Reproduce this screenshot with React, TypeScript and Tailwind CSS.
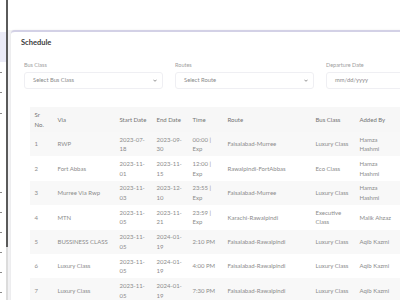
import React from 'react';

interface Row {
  sr: string;
  via: string;
  start: string;
  end: string;
  time: string;
  route: string;
  busClass: string;
  addedBy: string;
}

const ROWS: Row[] = [
  { sr: '1', via: 'RWP', start: '2023-07-\n18', end: '2023-09-\n30', time: '00:00 |\nExp', route: 'Faisalabad-Murree', busClass: 'Luxury Class', addedBy: 'Hamza\nHashmi' },
  { sr: '2', via: 'Fort Abbas', start: '2023-11-\n01', end: '2023-11-\n15', time: '12:00 |\nExp', route: 'Rawalpindi-FortAbbas', busClass: 'Eco Class', addedBy: 'Hamza\nHashmi' },
  { sr: '3', via: 'Murree Via Rwp', start: '2023-11-\n03', end: '2023-12-\n10', time: '23:55 |\nExp', route: 'Faisalabad-Murree', busClass: 'Luxury Class', addedBy: 'Hamza\nHashmi' },
  { sr: '4', via: 'MTN', start: '2023-11-\n05', end: '2023-11-\n21', time: '23:59 |\nExp', route: 'Karachi-Rawalpindi', busClass: 'Executive\nClass', addedBy: 'Malik Ahzaz' },
  { sr: '5', via: 'BUSSINESS CLASS', start: '2023-11-\n05', end: '2024-01-\n19', time: '2:10 PM', route: 'Faisalabad-Rawalpindi', busClass: 'Luxury Class', addedBy: 'Aqib Kazmi' },
  { sr: '6', via: 'Luxury Class', start: '2023-11-\n05', end: '2024-01-\n19', time: '4:00 PM', route: 'Faisalabad-Rawalpindi', busClass: 'Luxury Class', addedBy: 'Aqib Kazmi' },
  { sr: '7', via: 'Luxury Class', start: '2023-11-\n05', end: '2024-01-\n19', time: '7:30 PM', route: 'Faisalabad-Rawalpindi', busClass: 'Luxury Class', addedBy: 'Aqib Kazmi' },
];

const HEADERS = ['Sr\nNo.', 'Via', 'Start Date', 'End Date', 'Time', 'Route', 'Bus Class', 'Added By'];
const COL_W = ['w-[23px]', 'w-[62px]', 'w-[37px]', 'w-[36px]', 'w-[35px]', 'w-[88px]', 'w-[44px]', 'w-[60px]'];

// tiny chevrons on the collapsed sidebar
const SIDE_MARKS = [72, 92, 113, 192, 212, 232, 252, 272, 292];

const Chevron = () => (
  <svg width="4" height="3" viewBox="0 0 10 6" className="shrink-0">
    <path d="M1 1l4 4 4-4" fill="none" stroke="#555" strokeWidth="1.6" />
  </svg>
);

const SelectBox = ({ label, placeholder, chevron = true }: { label: string; placeholder: string; chevron?: boolean }) => (
  <div className="w-[139px] shrink-0">
    <div className="text-[5.5px] leading-[8px] text-[#a0a0a0] mb-[3px]">{label}</div>
    <div className="h-[17px] border border-[#efeff3] rounded-[3px] bg-white flex items-center justify-between pl-[8px] pr-[5px]">
      <span className="text-[5.8px] text-[#8a8a8a]">{placeholder}</span>
      {chevron && <Chevron />}
    </div>
  </div>
);

const App: React.FC = () => {
  return (
    <div className="w-[400px] h-[300px] overflow-hidden flex bg-white" style={{ fontFamily: 'Lato, "Open Sans", sans-serif' }}>
      {/* sidebar sliver */}
      <div className="w-[8px] h-full flex shrink-0">
        <div className="w-[6px] h-full relative bg-white">
          <div className="mt-[32px] h-[30px] bg-[#ebebf7]" />
          {SIDE_MARKS.map((y) => (
            <div key={y} className="absolute left-0 w-[2px] h-[1px] bg-[#8a8a8a]" style={{ top: y }} />
          ))}
        </div>
        <div className="w-[2px] h-full bg-[#dcdcdc] flex flex-col">
          <div className="h-[247px] bg-[#5a5a5a]" />
        </div>
      </div>

      {/* main */}
      <div className="flex-1 flex flex-col min-w-0">
        <div className="h-[30px] bg-white shrink-0" />
        <div className="flex-1 bg-[#f2f2f4] pl-[3px] min-w-0">
          <div className="h-full bg-white border-t-2 border-[#d3d1e6] rounded-tl-[4px] shadow-[0_0_2px_rgba(0,0,0,0.08)] w-[420px]">
            <div className="h-[22px] flex items-center pl-[10px] text-[7.5px] font-bold text-[#3a3a3a]">Schedule</div>

            <div className="pl-[13px] pt-[7px] flex gap-[12px]">
              <SelectBox label="Bus Class" placeholder="Select Bus Class" />
              <SelectBox label="Routes" placeholder="Select Route" />
              <SelectBox label="Departure Date" placeholder="mm/dd/yyyy" chevron={false} />
            </div>

            <div className="pl-[19px] pt-[18px]">
              <table className="table-fixed border-collapse text-[6px] leading-[9.5px] text-[#8c8c8c]">
                <thead>
                  <tr className="bg-[#f7f7f7]">
                    {HEADERS.map((h, i) => (
                      <th key={h} className={`${COL_W[i]} text-left font-normal text-[#737373] whitespace-pre-line px-[4.5px] h-[25px] py-[3px]`}>
                        {h}
                      </th>
                    ))}
                  </tr>
                </thead>
                <tbody>
                  {ROWS.map((r, idx) => (
                    <tr key={r.sr} className={idx % 2 === 0 ? 'bg-[#f8f8f8]' : 'bg-white'}>
                      {[r.sr, r.via, r.start, r.end, r.time, r.route, r.busClass, r.addedBy].map((c, i) => (
                        <td key={i} className="whitespace-pre-line px-[4.5px] py-[2.7px] h-[24.4px] align-middle">
                          {c}
                        </td>
                      ))}
                    </tr>
                  ))}
                </tbody>
              </table>
            </div>
          </div>
        </div>
      </div>
    </div>
  );
};

export default App;
